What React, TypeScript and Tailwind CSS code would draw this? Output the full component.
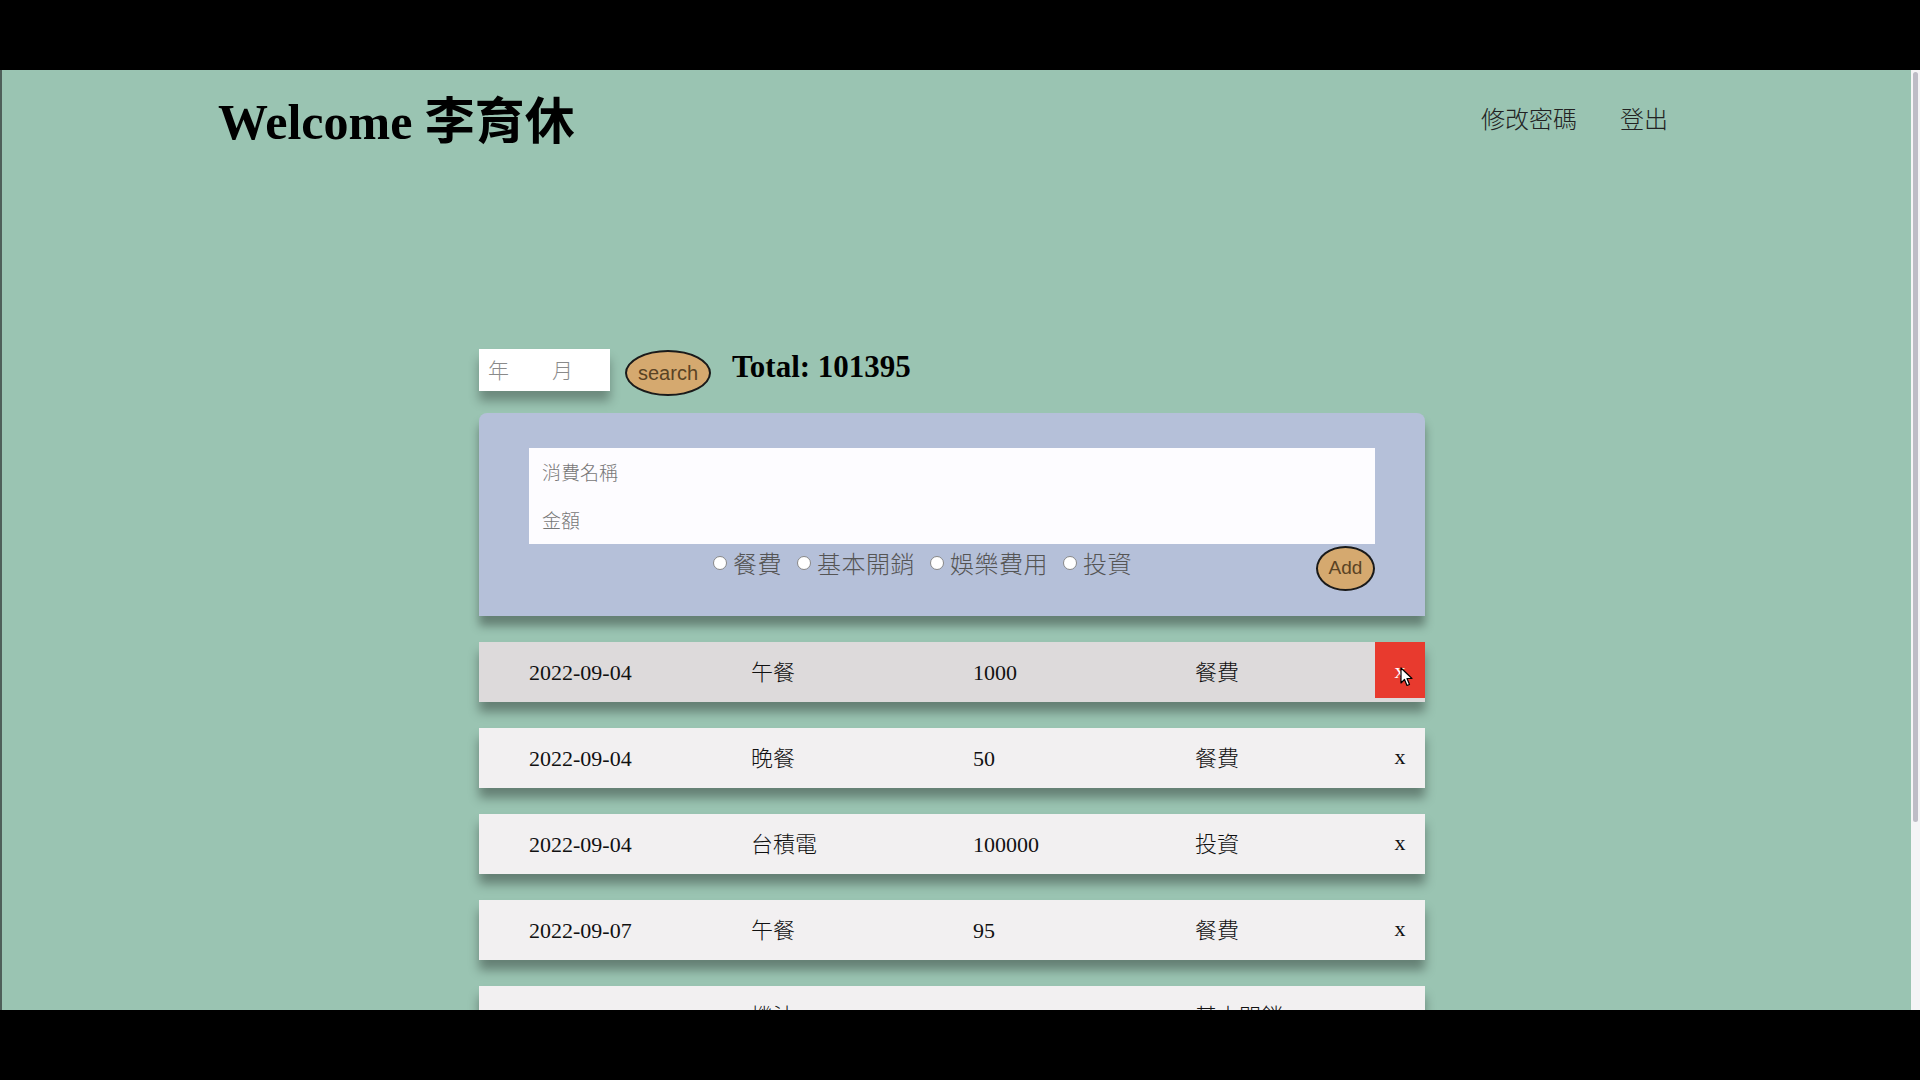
import React from "react"

type Record = {
  date: string
  name: string
  amount: string
  category: string
}

const records: Record[] = [
  { date: "2022-09-04", name: "午餐", amount: "1000", category: "餐費" },
  { date: "2022-09-04", name: "晚餐", amount: "50", category: "餐費" },
  { date: "2022-09-04", name: "台積電", amount: "100000", category: "投資" },
  { date: "2022-09-07", name: "午餐", amount: "95", category: "餐費" },
  { date: "2022-09-14", name: "機油", amount: "250", category: "基本開銷" },
]

const categories = ["餐費", "基本開銷", "娛樂費用", "投資"]

const serif = "font-['Liberation_Serif','Noto_Sans_CJK_TC',serif]"

function Cursor() {
  return (
    <svg className="pointer-events-none absolute left-[25px] top-[25px]" width="13" height="20" viewBox="0 0 13 20">
      <path d="M1 1 L1 16 L4.5 12.5 L7 18.5 L9.5 17.5 L7 11.5 L12 11.5 Z" fill="white" stroke="black" strokeWidth="1.2" strokeLinejoin="round" />
    </svg>
  )
}

export default function App() {
  return (
    <div className="flex h-[1080px] w-[1920px] flex-col overflow-hidden bg-black">
      <div className="h-[70px] shrink-0" />

      <div className="flex h-[940px] shrink-0">
        <div className="w-[2px] bg-[#4f5f5a]" />

        {/* página */}
        <div className="flex-1 overflow-hidden bg-[#9ac4b2]">
          <header className="flex items-start justify-between pl-[216px] pr-[243px] pt-[27px]">
            <h1 className={`${serif} text-[50px] font-bold leading-none text-black`}>Welcome 李育休</h1>
            <nav className="flex gap-[43px] pt-[6px] font-['Noto_Sans_CJK_TC',sans-serif] text-[24px] font-light leading-[30px] text-[#222]">
              <a>修改密碼</a>
              <a>登出</a>
            </nav>
          </header>

          <main className="ml-[477px] mt-[202px] w-[946px]">
            {/* busca */}
            <div className="flex items-start">
              <div className="flex h-[42px] w-[131px] items-center bg-white pl-[9px] font-['Noto_Sans_CJK_TC',sans-serif] text-[21px] font-light text-[#8a8a8a] shadow-[0_10px_10px_rgba(0,0,0,0.3)]">
                <span>年</span>
                <span className="ml-[43px]">月</span>
              </div>
              <button className="ml-[15px] mt-[1px] h-[46px] w-[86px] rounded-[50%] border-2 border-[#1a1a1a] bg-[#d5a96f] font-['Liberation_Sans',sans-serif] text-[20px] text-[#5a4324]">
                search
              </button>
              <h2 className={`${serif} ml-[21px] text-[31px] font-bold leading-[36px] text-black`}>Total: 101395</h2>
            </div>

            {/* formulário */}
            <div className="mt-[17px] h-[203px] rounded-t-[8px] bg-[#b5c0d9] px-[50px] pt-[35px] shadow-[0_10px_10px_rgba(0,0,0,0.35)]">
              <div className="bg-[#fdfcff] font-['Noto_Sans_CJK_TC',sans-serif] text-[19px] font-light text-[#777]">
                <div className="flex h-[48px] items-center pl-[13px]">消費名稱</div>
                <div className="flex h-[48px] items-center pl-[13px]">金額</div>
              </div>
              <div className="flex items-start">
                <div className="mt-[4px] flex flex-1 justify-center gap-[15px] font-['Noto_Sans_CJK_TC',sans-serif] text-[24px] font-light leading-[30px] text-[#555]">
                  {categories.map((c) => (
                    <label key={c} className="flex items-center gap-[6px]">
                      <span className="h-[14px] w-[14px] rounded-full border border-[#888] bg-white" />
                      <span className="tracking-[0.5px]">{c}</span>
                    </label>
                  ))}
                </div>
                <button className="mt-[2px] h-[45px] w-[59px] rounded-[50%] border-2 border-[#1a1a1a] bg-[#d5a96f] font-['Liberation_Sans',sans-serif] text-[19px] text-[#5a4324]">
                  Add
                </button>
              </div>
            </div>

            {/* lista */}
            <div className="mt-[26px] flex flex-col gap-[26px]">
              {records.map((r, i) => (
                <div
                  key={i}
                  className={`flex h-[60px] items-center pl-[50px] ${serif} text-[22px] font-light text-[#111] shadow-[0_10px_10px_rgba(0,0,0,0.35)] ${
                    i === 0 ? "bg-[#dddadb]" : "bg-[#f2f0f1]"
                  }`}
                >
                  <span className="w-[222px]">{r.date}</span>
                  <span className="w-[222px]">{r.name}</span>
                  <span className="w-[222px]">{r.amount}</span>
                  <span className="flex-1">{r.category}</span>
                  {i === 0 ? (
                    <button className="relative flex h-[56px] w-[50px] items-center justify-center self-start bg-[#e83a2e] text-white">
                      x
                      <Cursor />
                    </button>
                  ) : (
                    <button className="flex h-[56px] w-[50px] items-center justify-center self-start">x</button>
                  )}
                </div>
              ))}
            </div>
          </main>
        </div>

        {/* barra de rolagem */}
        <div className="flex w-[9px] flex-col bg-[#f4f4f6] px-[2px]">
          <div className="mt-[2px] h-[750px] rounded-full bg-[#bdbcc6]" />
        </div>
      </div>
    </div>
  )
}
